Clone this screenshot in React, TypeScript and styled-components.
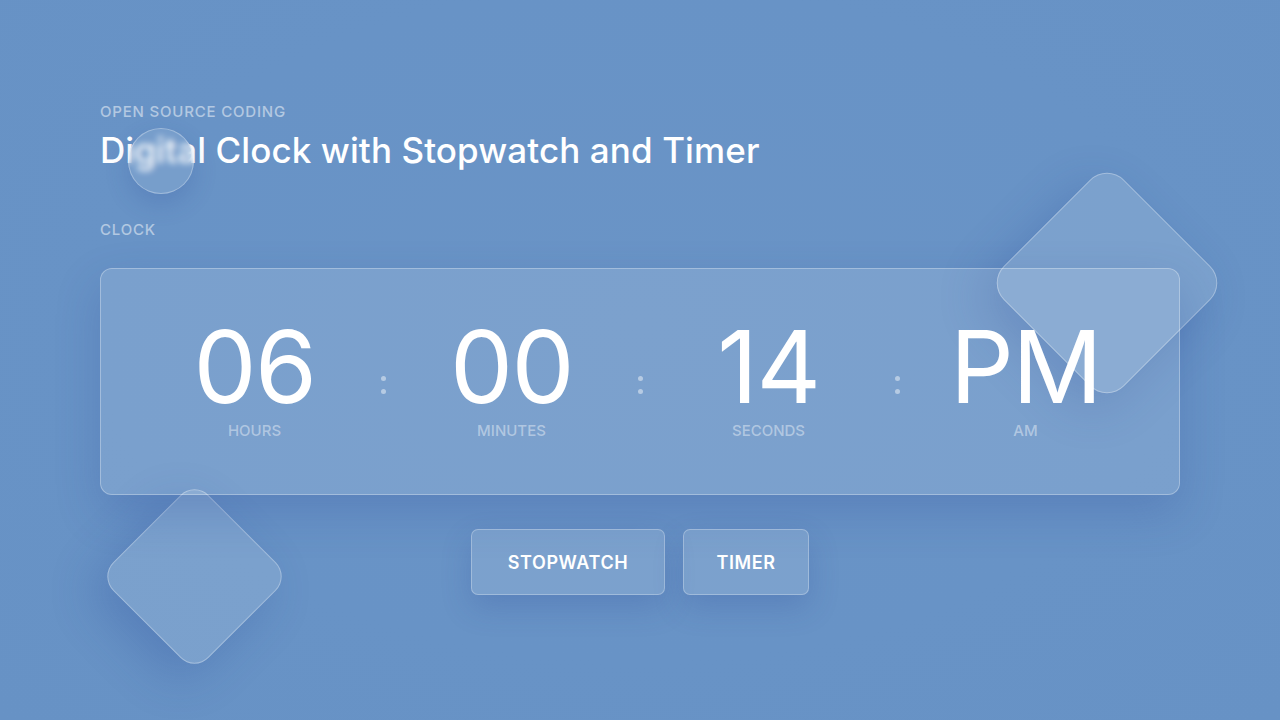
import { Fragment } from 'react'
import styled, { createGlobalStyle } from 'styled-components'

const GlobalStyle = createGlobalStyle`
  * { box-sizing: border-box; }
  html, body {
    margin: 0;
    padding: 0;
    background: #6a94c6;
    font-family: "Inter", "Open Sans", sans-serif;
  }
`

const Page = styled.main`
  position: relative;
  width: 1280px;
  height: 720px;
  overflow: hidden;
  padding: 103px 100px 0;
  background: radial-gradient(ellipse at 50% 45%, #6a94c6 0%, #6893c6 60%, #6792c5 100%);
`

const Eyebrow = styled.p`
  margin: 0;
  font-size: 15px;
  font-weight: 500;
  letter-spacing: 0.8px;
  color: rgba(255, 255, 255, 0.5);
  line-height: 18px;
`

const Title = styled.h1`
  margin: 9px 0 0;
  font-size: 35px;
  font-weight: 500;
  color: #fff;
  line-height: 40px;
  letter-spacing: 0.1px;
`

const SectionLabel = styled(Eyebrow)`
  margin-top: 51px;
`

const Card = styled.section`
  position: relative;
  z-index: 2;
  margin-top: 29px;
  width: 1080px;
  height: 227px;
  border-radius: 12px;
  background: rgba(255, 255, 255, 0.12);
  border: 1px solid rgba(255, 255, 255, 0.3);
  box-shadow: 0 18px 45px rgba(40, 70, 150, 0.22);
  display: flex;
  justify-content: center;
  align-items: flex-start;
  padding-top: 58px;
`

const Unit = styled.div`
  width: 200px;
  display: flex;
  flex-direction: column;
  align-items: center;
`

const Value = styled.div`
  font-size: 100px;
  font-weight: 400;
  line-height: 80px;
  height: 80px;
  color: #fff;
  letter-spacing: -1.5px;
`

const UnitLabel = styled.div`
  margin-top: 15px;
  font-size: 15px;
  line-height: 18px;
  font-weight: 500;
  color: rgba(255, 255, 255, 0.42);
`

const Colon = styled.div`
  width: 57px;
  display: flex;
  flex-direction: column;
  align-items: center;
  gap: 8px;
  padding-top: 49px;

  &::before, &::after {
    content: '';
    width: 5px;
    height: 5px;
    border-radius: 50%;
    background: rgba(255, 255, 255, 0.45);
  }
`

const Actions = styled.div`
  position: relative;
  z-index: 2;
  margin-top: 34px;
  display: flex;
  justify-content: center;
  gap: 18px;
`

const Button = styled.button<{ $w: number }>`
  width: ${p => p.$w}px;
  height: 66px;
  border-radius: 7px;
  background: rgba(255, 255, 255, 0.13);
  border: 1px solid rgba(255, 255, 255, 0.28);
  box-shadow: 0 12px 30px rgba(40, 70, 150, 0.22);
  color: #fff;
  font-family: inherit;
  font-size: 18px;
  font-weight: 600;
  letter-spacing: 0.6px;
  cursor: pointer;
`

const Diamond = styled.div<{ $size: number; $x: number; $y: number; $r: number }>`
  position: absolute;
  z-index: 1;
  left: ${p => p.$x}px;
  top: ${p => p.$y}px;
  width: ${p => p.$size}px;
  height: ${p => p.$size}px;
  border-radius: ${p => p.$r}px;
  transform: rotate(45deg);
  background: rgba(255, 255, 255, 0.13);
  border: 1px solid rgba(255, 255, 255, 0.3);
  box-shadow: 0 20px 45px rgba(40, 70, 150, 0.25);
`

const Bubble = styled.div`
  position: absolute;
  z-index: 3;
  left: 128px;
  top: 128px;
  width: 66px;
  height: 66px;
  border-radius: 50%;
  background: rgba(255, 255, 255, 0.1);
  border: 1px solid rgba(255, 255, 255, 0.3);
  backdrop-filter: blur(3px);
  box-shadow: 0 10px 25px rgba(40, 70, 150, 0.2);
`

const units = [
  { value: '06', label: 'HOURS' },
  { value: '00', label: 'MINUTES' },
  { value: '14', label: 'SECONDS' },
  { value: 'PM', label: 'AM' },
]

export default function App() {
  return (
    <>
      <GlobalStyle />
      <Page>
        <Eyebrow>OPEN SOURCE CODING</Eyebrow>
        <Title>Digital Clock with Stopwatch and Timer</Title>
        <SectionLabel>CLOCK</SectionLabel>

        <Card>
          {units.map((u, i) => (
            <Fragment key={u.label}>
              {i > 0 && <Colon />}
              <Unit>
                <Value>{u.value}</Value>
                <UnitLabel>{u.label}</UnitLabel>
              </Unit>
            </Fragment>
          ))}
        </Card>

        <Actions>
          <Button $w={194}>STOPWATCH</Button>
          <Button $w={126}>TIMER</Button>
        </Actions>

        <Diamond $size={170} $r={24} $x={1022} $y={198} />
        <Diamond $size={135} $r={20} $x={127} $y={509} />
        <Bubble />
      </Page>
    </>
  )
}
